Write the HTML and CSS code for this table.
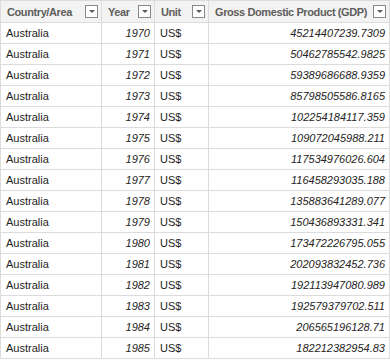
FILE: index.html
```html
<!DOCTYPE html>
<html lang="en">

<head>
  <meta charset="UTF-8">
  <title>GDP</title>
  <link rel="stylesheet" href="styles.css">
</head>

<body>
  <table class="grid">
    <colgroup>
      <col class="c-country">
      <col class="c-year">
      <col class="c-unit">
      <col class="c-gdp">
    </colgroup>
    <thead>
      <tr>
        <th><div class="head"><span>Country/Area</span><span class="filter"></span></div></th>
        <th><div class="head"><span>Year</span><span class="filter"></span></div></th>
        <th><div class="head"><span>Unit</span><span class="filter"></span></div></th>
        <th><div class="head"><span>Gross Domestic Product (GDP)</span><span class="filter"></span></div></th>
      </tr>
    </thead>
    <tbody id="rows"></tbody>
  </table>

  <script>
    const data = [
      [1970, '45214407239.7309'],
      [1971, '50462785542.9825'],
      [1972, '59389686688.9359'],
      [1973, '85798505586.8165'],
      [1974, '102254184117.359'],
      [1975, '109072045988.211'],
      [1976, '117534976026.604'],
      [1977, '116458293035.188'],
      [1978, '135883641289.077'],
      [1979, '150436893331.341'],
      [1980, '173472226795.055'],
      [1981, '202093832452.736'],
      [1982, '192113947080.989'],
      [1983, '192579379702.511'],
      [1984, '206565196128.71'],
      [1985, '182212382954.83']
    ];

    const body = document.getElementById('rows');
    data.forEach(row => {
      const tr = document.createElement('tr');
      tr.innerHTML =
        '<td>Australia</td>' +
        '<td class="num">' + row[0] + '</td>' +
        '<td>US$</td>' +
        '<td class="num">' + row[1] + '</td>';
      body.appendChild(tr);
    });
  </script>
</body>

</html>
```

FILE: styles.css
```css
body {
  margin: 0;
  padding: 0;
  background-color: #ffffff;
  font-family: 'Liberation Sans', Arial, sans-serif;
  font-size: 11px;
  color: #252423;
}

.grid {
  width: 389px;
  border-collapse: collapse;
  table-layout: fixed;
}

.c-country {
  width: 101px;
}

.c-year {
  width: 53px;
}

.c-unit {
  width: 54px;
}

.c-gdp {
  width: 181px;
}

th,
td {
  border: 1px solid #dcdcdc;
  padding: 0 4px 0 5px;
  white-space: nowrap;
  overflow: hidden;
}

th {
  height: 21px;
  background-color: #f3f3f3;
  font-weight: bold;
  font-size: 11px;
  letter-spacing: -0.4px;
  color: #605e5c;
  text-align: left;
  padding: 0 3px 0 6px;
}

td {
  height: 20px;
}

.head {
  display: flex;
  align-items: center;
  justify-content: space-between;
  gap: 6px;
}

.filter {
  position: relative;
  width: 11px;
  height: 11px;
  border: 1px solid #8a8886;
  background-color: #ffffff;
  flex-shrink: 0;
}

.filter::after {
  content: '';
  position: absolute;
  left: 3px;
  top: 4px;
  border-left: 3px solid transparent;
  border-right: 3px solid transparent;
  border-top: 3px solid #605e5c;
}

.num {
  text-align: right;
  font-style: italic;
}
```
